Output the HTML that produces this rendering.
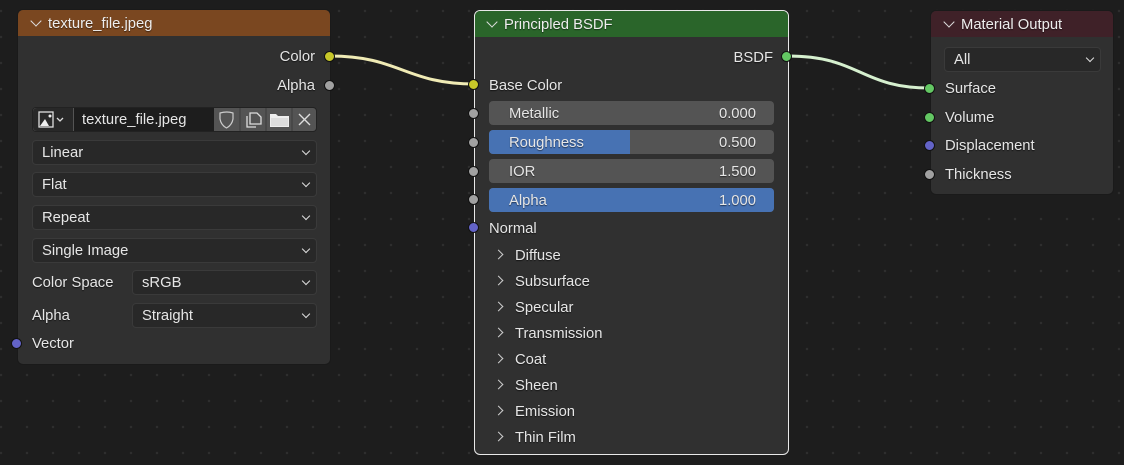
<!DOCTYPE html>
<html><head><meta charset="utf-8"><style>
*{box-sizing:border-box;margin:0;padding:0}
body{width:1124px;height:465px;overflow:hidden;background:#1d1d1d;
background-image:radial-gradient(circle,#2e2e2e 1px,transparent 1.5px);background-size:26px 26px;background-position:-12px -2px;
font-family:"Liberation Sans","DejaVu Sans",sans-serif;font-size:14.8px;color:#e6e6e6;position:relative}
.node{position:absolute;background:#303030;border:1px solid #1a1a1a;border-radius:6px;overflow:visible}
.hdr{height:26px;border-radius:5px 5px 0 0;padding-left:14px;line-height:28px;font-size:14.8px;color:#eee;text-shadow:0 1px 1px #0008}
.hdr .chev{display:inline-block;width:8px;height:8px;border-right:1.5px solid #ddd;border-bottom:1.5px solid #ddd;transform:rotate(45deg);margin-right:8px;position:relative;top:-3px}
.a{position:absolute;white-space:nowrap;text-shadow:0 1px 1px #0009;margin-top:2px}
.sock{position:absolute;width:11px;height:11px;border-radius:50%;border:1px solid #111}
.dd{position:absolute;background:#282828;border:1px solid #3a3a3a;border-radius:4px;height:25px;line-height:25px;padding-left:9px;color:#e6e6e6}
.dd:after{content:"";position:absolute;right:7px;top:7px;width:5px;height:5px;border-right:1.5px solid #ddd;border-bottom:1.5px solid #ddd;transform:rotate(45deg)}
.sl{position:absolute;left:14px;width:285px;height:24px;background:#545454;border-radius:4px;line-height:26px;overflow:hidden}
.sl .f{position:absolute;left:0;top:0;bottom:0;background:#4772b3}
.sl .l{position:absolute;left:20px;text-shadow:0 1px 1px #0008}
.sl .v{position:absolute;right:18px;text-shadow:0 1px 1px #0008}
.ar{position:absolute;left:20px;width:7px;height:7px;border-right:1.5px solid #ccc;border-top:1.5px solid #ccc;transform:rotate(45deg)}
</style></head><body>
<svg width="1124" height="465" style="position:absolute;left:0;top:0">
<path d="M330 56 C 400 56, 405 84, 475 84" stroke="#f0ebb5" stroke-width="3" fill="none"/>
<path d="M788 56 C 860 56, 860 88, 930 88" stroke="#d6f0cf" stroke-width="3" fill="none"/>
</svg>

<div class="node" style="left:17px;top:9px;width:314px;height:356px">
<div class="hdr" style="background:#7a4720">
<span class="chev"></span>texture_file.jpeg</div>
<div class="a" style="right:15px;top:37px">Color</div>
<div class="a" style="right:15px;top:66px">Alpha</div>
<div class="sock" style="left:306px;top:41px;background:#c7c729"></div>
<div class="sock" style="left:306px;top:70px;background:#a1a1a1"></div>
<div style="position:absolute;left:14px;top:97px;width:285px;height:25px;background:#545454;border-radius:4px;border:1px solid #222">
 <div style="position:absolute;left:0;top:0;width:40px;height:23px;background:#282828;border-radius:4px 0 0 4px">
  <svg width="40" height="23"><rect x="6" y="4" width="14" height="15" fill="none" stroke="#ddd" stroke-width="1.3"/><path d="M7 18 L12 11 L16 18Z" fill="#eee"/><circle cx="17" cy="8" r="1.5" fill="#eee"/><path d="M24 10 l3 3 l3 -3" fill="none" stroke="#ddd" stroke-width="1.3"/></svg>
 </div>
 <div style="position:absolute;left:41px;top:0;width:140px;height:23px;background:#1d1d1d;padding-left:8px;line-height:25px">texture_file.jpeg</div>
 <svg style="position:absolute;left:181px;top:0" width="104" height="23">
  <path d="M6 5 Q13 3 19 5 L19 11 Q18 17 12.5 20 Q7 17 6 11Z" fill="none" stroke="#ccc" stroke-width="1.2"/>
  <line x1="26" y1="0" x2="26" y2="23" stroke="#3c3c3c"/>
  <path d="M33 8 L33 19 L42 19 M36 16 L36 5 L43 5 L47 9 L47 16Z" fill="none" stroke="#ddd" stroke-width="1.3"/>
  <line x1="52" y1="0" x2="52" y2="23" stroke="#3c3c3c"/>
  <path d="M56 6 L62 6 L64 8 L75 8 L75 19 L56 19Z" fill="#eee"/><rect x="57" y="10" width="17" height="8" fill="#ddd"/>
  <line x1="78" y1="0" x2="78" y2="23" stroke="#3c3c3c"/>
  <path d="M85 6 L96 17 M96 6 L85 17" stroke="#ddd" stroke-width="1.4"/>
 </svg>
</div>
<div class="dd" style="left:14px;top:130px;width:285px">Linear</div>
<div class="dd" style="left:14px;top:162px;width:285px">Flat</div>
<div class="dd" style="left:14px;top:195px;width:285px">Repeat</div>
<div class="dd" style="left:14px;top:228px;width:285px">Single Image</div>
<div class="a" style="left:14px;top:263px">Color Space</div>
<div class="dd" style="left:114px;top:260px;width:185px">sRGB</div>
<div class="a" style="left:14px;top:296px">Alpha</div>
<div class="dd" style="left:114px;top:293px;width:185px">Straight</div>
<div class="a" style="left:14px;top:324px">Vector</div>
<div class="sock" style="left:-7px;top:328px;background:#6363c7"></div>
</div>

<div class="node" style="left:474px;top:10px;width:315px;height:445px;border:1.5px solid #e8e8e8">
<div class="hdr" style="background:#2a652a;padding-left:13px"><span class="chev"></span>Principled BSDF</div>
<div class="a" style="right:15px;top:37px">BSDF</div>
<div class="sock" style="left:306px;top:40px;background:#63c763"></div>
<div class="a" style="left:14px;top:65px">Base Color</div>
<div class="sock" style="left:-7px;top:68px;background:#c7c729"></div>
<div class="sl" style="top:90px"><span class="l">Metallic</span><span class="v">0.000</span></div>
<div class="sl" style="top:119px"><div class="f" style="width:141px"></div><span class="l">Roughness</span><span class="v">0.500</span></div>
<div class="sl" style="top:148px"><span class="l">IOR</span><span class="v">1.500</span></div>
<div class="sl" style="top:177px"><div class="f" style="width:285px"></div><span class="l">Alpha</span><span class="v">1.000</span></div>
<div class="sock" style="left:-7px;top:97px;background:#a1a1a1"></div>
<div class="sock" style="left:-7px;top:126px;background:#a1a1a1"></div>
<div class="sock" style="left:-7px;top:155px;background:#a1a1a1"></div>
<div class="sock" style="left:-7px;top:183px;background:#a1a1a1"></div>
<div class="a" style="left:14px;top:208px">Normal</div>
<div class="sock" style="left:-7px;top:211px;background:#6363c7"></div>
<div class="ar" style="top:240px"></div><div class="a" style="left:40px;top:235px">Diffuse</div>
<div class="ar" style="top:266px"></div><div class="a" style="left:40px;top:261px">Subsurface</div>
<div class="ar" style="top:292px"></div><div class="a" style="left:40px;top:287px">Specular</div>
<div class="ar" style="top:318px"></div><div class="a" style="left:40px;top:313px">Transmission</div>
<div class="ar" style="top:344px"></div><div class="a" style="left:40px;top:339px">Coat</div>
<div class="ar" style="top:370px"></div><div class="a" style="left:40px;top:365px">Sheen</div>
<div class="ar" style="top:396px"></div><div class="a" style="left:40px;top:391px">Emission</div>
<div class="ar" style="top:422px"></div><div class="a" style="left:40px;top:417px">Thin Film</div>
</div>

<div class="node" style="left:930px;top:10px;width:184px;height:185px">
<div class="hdr" style="background:#3f2128;padding-left:14px"><span class="chev"></span>Material Output</div>
<div class="dd" style="left:13px;top:36px;width:157px">All</div>
<div class="a" style="left:14px;top:68px">Surface</div>
<div class="sock" style="left:-7px;top:72px;background:#63c763"></div>
<div class="a" style="left:14px;top:97px">Volume</div>
<div class="sock" style="left:-7px;top:101px;background:#63c763"></div>
<div class="a" style="left:14px;top:125px">Displacement</div>
<div class="sock" style="left:-7px;top:129px;background:#6363c7"></div>
<div class="a" style="left:14px;top:154px">Thickness</div>
<div class="sock" style="left:-7px;top:158px;background:#a1a1a1"></div>
</div>
</body></html>
